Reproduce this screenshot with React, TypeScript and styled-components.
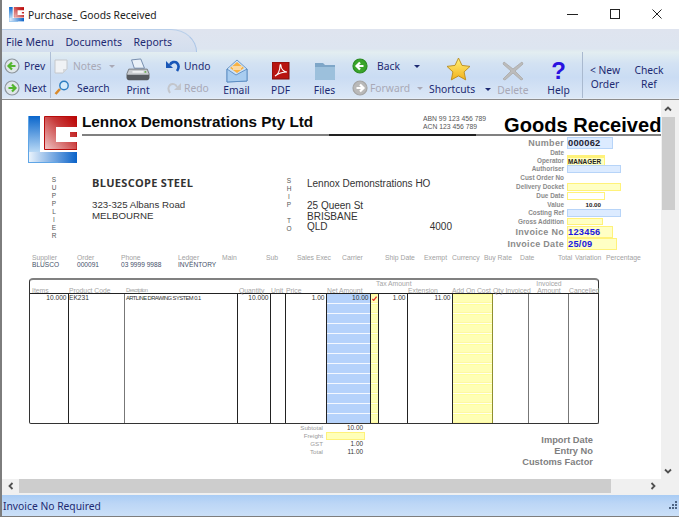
import React from "react";
import styled, { createGlobalStyle } from "styled-components";

const Global = createGlobalStyle`
  html, body { margin: 0; padding: 0; background: #fff; }
  * { box-sizing: border-box; }
  body { font-family: "Liberation Sans", Arial, sans-serif; }
`;

const Win = styled.div`
  width: 679px; height: 517px; overflow: hidden; display: flex; flex-direction: column;
  background: #f0f0f0; border-left: 2px solid #7d7d7d; border-bottom: 1px solid #7d7d7d;
`;
const TitleBar = styled.div`
  height: 29px; margin-left: -2px; background: #fff; display: flex; align-items: center; padding-left: 9px; flex: none;
`;
const TitleText = styled.span`
  font: 10.3px "Noto Sans", sans-serif; color: #222; margin-left: 4px;
`;
const WinButtons = styled.div`
  margin-left: auto; display: flex; align-items: center; height: 100%;
`;
const WinBtn = styled.div`
  width: 42.5px; display: flex; justify-content: center; margin-top: -1px;
`;
const MenuBar = styled.div`
  height: 23px; flex: none; background: linear-gradient(#dfe4ef, #dde5f0 85%, #e2edf0);
`;
const MenuTab = styled.div`
  width: 195px; height: 23px; padding: 6px 0 0 4px; display: flex; gap: 11.5px;
  border-top-right-radius: 26px 23px; border-right: 1px solid #a9c4e6; border-top: 1px solid #b9cfea;
  background: linear-gradient(#dde3ef, #d3deee);
`;
const navy = "#1d2a72";
const MenuItem = styled.span`
  font: 10.5px "Noto Sans", sans-serif; color: ${navy}; line-height: 13px;
`;
const Ribbon = styled.div`
  height: 47px; flex: none; display: flex; border-bottom: 1px solid #e4ecf6;
  background: linear-gradient(#e3eef1 0%, #d3e2f3 25%, #cadcf3 55%, #dbe7f6 100%);
`;
const RibbonEdge = styled.div`
  height: 1px; flex: none; background: #8d8d8d;
`;
const NavGroup = styled.div`
  width: 49px; border-right: 1px solid #aebfd6; display: flex; flex-direction: column; padding: 6px 0 0 2px; gap: 6px;
`;
const Stack = styled.div<{ $w: number; $pl?: number }>`
  width: ${p => p.$w}px; padding: 6px 0 0 ${p => p.$pl ?? 0}px; display: flex; flex-direction: column; gap: 6px;
`;
const StackRow = styled.div<{ $ml?: number }>`
  height: 16px; display: flex; align-items: center; margin-left: ${p => p.$ml ?? 0}px;
`;
const Label = styled.span<{ $off?: boolean; $ml?: number }>`
  font: 10.3px/13px "Noto Sans", sans-serif; white-space: nowrap;
  color: ${p => (p.$off ? "#a9a9b6" : navy)}; margin-left: ${p => p.$ml ?? 0}px;
`;
const Caret = styled.span<{ $off?: boolean; $ml: number }>`
  width: 0; height: 0; border: 3px solid transparent; border-top-color: ${p => (p.$off ? "#a9a9b6" : navy)};
  border-bottom: 0; margin-left: ${p => p.$ml}px;
`;
const BigCol = styled.div<{ $w: number; $start?: boolean }>`
  width: ${p => p.$w}px; display: flex; flex-direction: column; align-items: ${p => (p.$start ? "flex-start" : "center")};
  justify-content: flex-end; padding-bottom: 1px; height: 46px;
`;
const BigIcon = styled.div<{ $ml?: number }>`
  flex: 1; display: flex; align-items: center; justify-content: center; padding-top: 5px; margin-left: ${p => p.$ml ?? 0}px;
`;
const HelpMark = styled.span`
  font: bold 24px/24px "Liberation Sans", sans-serif; color: #2a12e0;
`;
const TextCol = styled.div<{ $w: number; $sep?: boolean }>`
  width: ${p => p.$w}px; text-align: center; padding-top: 11px; font: 10.3px/14px "Noto Sans", sans-serif; color: ${navy};
  ${p => (p.$sep ? "border-left: 1px solid #a9b9cf;" : "")}
`;
const Middle = styled.div`
  height: 379px; flex: none; display: flex;
`;
const Page = styled.div`
  width: 659px; height: 379px; background: #fff; overflow: hidden; flex: none; padding-left: 1px;
`;
const Letterhead = styled.div`
  display: flex; height: 36px; padding: 14px 0 0 25px;
`;
const HeadMain = styled.div`
  flex: 1; margin-left: 5px; height: 22px; display: flex;
  border-bottom: 2px solid; border-image: linear-gradient(90deg, #808080 0 247px, #222 247px 394px, #808080 394px) 1;
`;
const LogoWrap = styled.div`
  margin-top: 2px; height: 47px; flex: none;
`;
const Company = styled.div`
  font: bold 15.3px/15px "Liberation Sans", sans-serif; color: #0a0a0a; white-space: nowrap; width: 341px; flex: none;
`;
const Abn = styled.div`
  font: 6.8px/8px "Liberation Sans", sans-serif; color: #555; width: 81px; padding-top: 1px; flex: none;
`;
const DocTitle = styled.div`
  font: bold 20.1px/22px "Liberation Sans", sans-serif; color: #000; white-space: nowrap;
`;
const Body = styled.div`
  display: flex; height: 118px;
`;
const Parties = styled.div`
  width: 502px; padding: 40px 0 0 47px; display: flex; flex: none;
`;
const Party = styled.div<{ $w: number }>`
  width: ${p => p.$w}px; display: flex; flex: none;
`;
const SideLetters = styled.div<{ $pt?: number }>`
  width: 8px; flex: none; display: flex; flex-direction: column; text-align: center; padding-top: ${p => p.$pt ?? 0}px;
  font: 6.5px/8px "Liberation Sans", sans-serif; color: #555;
`;
const Address = styled.div<{ $ml: number; $w: number; $size: number }>`
  margin-left: ${p => p.$ml}px; width: ${p => p.$w}px; font: ${p => p.$size}px/10.5px "Liberation Sans", sans-serif; color: #333;
`;
const Supplier = styled.div`
  font: bold 11px/13px "Open Sans", sans-serif; color: #333; margin-bottom: 11px; letter-spacing: .3px; white-space: nowrap;
`;
const ShipName = styled.div`
  margin: 2px 0 12px; line-height: 11px; white-space: nowrap;
`;
const AddressLine = styled.div`
  display: flex; justify-content: space-between; width: 145px;
`;
const Fields = styled.div`
  padding-top: 1px; display: flex; flex-direction: column;
`;
const FieldRow = styled.div<{ $h: number }>`
  height: ${p => p.$h}px; display: flex; align-items: center;
`;
const FieldLabel = styled.div<{ $big?: boolean }>`
  width: 59px; margin-right: 3px; display: flex; justify-content: flex-end; white-space: nowrap; color: #8b8b8b; flex: none;
  font: bold ${p => (p.$big ? "9px" : "6.4px")}/8px "Liberation Sans", sans-serif; letter-spacing: ${p => (p.$big ? ".3px" : "0")};
`;
const tones: Record<string, string> = {
  blue: "background:#dcebff;border:1px solid #b7d4f8;",
  yellow: "background:#ffffc4;border:1px solid #fff27a;",
  hollow: "background:#fff;border:1px solid #fff27a;",
};
const FieldBox = styled.div<{ $tone: string; $w: number; $h?: number; $color?: string; $size?: number; $align?: string }>`
  width: ${p => p.$w}px; height: ${p => p.$h ?? 9}px; ${p => tones[p.$tone]} flex: none;
  align-self: ${p => p.$align ?? "center"};
  color: ${p => p.$color ?? "#222"}; font: bold ${p => p.$size ?? 6.4}px/${p => (p.$h ?? 9) - 2}px "Liberation Sans", sans-serif;
  letter-spacing: ${p => ((p.$size ?? 6) > 8 ? ".25px" : "0")}; white-space: nowrap;
`;
const PlainValue = styled.div`
  width: 34px; text-align: right; font: bold 6.2px/8px "Liberation Sans", sans-serif; color: #222;
`;
const InfoRow = styled.div`
  height: 24px; margin-left: 29px; display: grid;
  grid-template-columns: 45px 44px 57px 44px 44px 31px 45px 43px 39px 28px 32px 36px 38px 17px 31px 50px;
`;
const InfoCell = styled.div`
  font: 6.8px/7px "Liberation Sans", sans-serif; color: #a2a2a2; white-space: nowrap;
`;
const InfoValue = styled.div`
  color: #44506a; font-size: 6.6px;
`;
const Table = styled.div`
  margin-left: 26px; width: 570px; height: 146px; border: 1px solid #333; border-top: 2px solid #808080; border-radius: 4px 4px 2px 2px;
  display: flex; flex-direction: column;
`;
const cols = "39px 56px 113px 33px 15px 41px 44px 8px 29px 45px 40px 36px 40px 1fr";
const THead = styled.div`
  height: 14px; display: grid; grid-template-columns: ${cols}; border-bottom: 1px solid #222; flex: none;
`;
const TH = styled.div<{ $pl?: number; $pb?: number; $ml?: number; $center?: boolean }>`
  display: flex; align-items: flex-end; white-space: nowrap; text-align: ${p => (p.$center ? "center" : "left")};
  justify-content: ${p => (p.$center ? "center" : "flex-start")}; margin-left: ${p => p.$ml ?? 0}px;
  padding: 0 0 ${p => p.$pb ?? 0}px ${p => p.$pl ?? 0}px; font: 6.8px/7px "Liberation Sans", sans-serif; color: #a5a5a5;
`;
const TBody = styled.div`
  flex: 1; display: grid; grid-template-columns: ${cols};
`;
const blueStripe = "background: repeating-linear-gradient(#b5d2fb 0 9px, #f4f8ff 9px 10px);";
const yellowStripe = "background: repeating-linear-gradient(#ffff9c 0 1px, #ffffb4 1px 8px, #fff9a0 8px 9px, #fffff0 9px 10px);";
const TD = styled.div<{ $tone?: string; $line?: string; $right?: boolean; $pl?: number }>`
  ${p => (p.$tone === "blue" ? blueStripe : p.$tone === "yellow" ? yellowStripe : "")}
  border-right: 1px solid ${p => p.$line ?? "#222"}; text-align: ${p => (p.$right ? "right" : "left")};
  padding: 0 ${p => (p.$right ? "1.5px" : "0")} 0 ${p => p.$pl ?? 0}px; font: 6.6px/8px "Liberation Sans", sans-serif; color: #333;
  white-space: nowrap; overflow: hidden;
`;
const LastTD = styled(TD)`border-right: 0;`;
const Tight = styled.span`
  letter-spacing: -.55px; font-size: 5.8px;
`;
const TightHead = styled.span`
  letter-spacing: -.7px; font-size: 5.8px;
`;
const Footer = styled.div`
  display: flex;
`;
const Totals = styled.div`
  width: 362px; display: grid; grid-template-columns: 320px 39px; grid-auto-rows: 8px; column-gap: 3px; flex: none;
`;
const TotalLabel = styled.div`
  font: 6.2px/8px "Liberation Sans", sans-serif; color: #9a9a9a; text-align: right;
`;
const TotalValue = styled.div<{ $fill?: boolean }>`
  font: 6.4px/8px "Liberation Sans", sans-serif; color: #333; text-align: right; padding-right: 2px;
  ${p => (p.$fill ? "background:#ffffb8;border:1px solid #fff27a;" : "")}
`;
const Import = styled.div`
  width: 228px; text-align: right; padding-top: 11px; font: bold 9.3px/11px "Liberation Sans", sans-serif; color: #7f7f7f; flex: none;
`;
const VScroll = styled.div`
  width: 14px; height: 379px; flex: none; background: #f0f0f0; display: flex; flex-direction: column; align-items: center;
`;
const ScrollEnd = styled.div`
  height: 17px; width: 14px; flex: none; display: flex; align-items: center; justify-content: center;
`;
const VThumb = styled.div`
  width: 13px; height: 93px; background: #cdcdcd; flex: none;
`;
const HScroll = styled.div`
  height: 14px; flex: none; width: 659px; background: #f0f0f0; display: flex; align-items: stretch;
`;
const HEnd = styled.div`
  width: 17px; flex: none; display: flex; align-items: center; justify-content: center;
`;
const HThumb = styled.div`
  width: 592px; background: #cdcdcd; flex: none;
`;
const Spacer = styled.div`flex: 1;`;
const Gap = styled.div`height: 2px; flex: none; background: #f0f0f0;`;
const Status = styled.div`
  height: 21px; flex: none; display: flex; align-items: center; padding: 0 2px 0 1px; justify-content: space-between;
  background: linear-gradient(#a9ccf4, #bcd6f6 40%, #cbe0f8);
  font: 10.3px "Noto Sans", sans-serif; color: ${navy};
`;

const Logo = ({ w, id }: { w: number; id: string }) => (
  <svg width={w} height={(w * 47) / 49} viewBox="0 0 49 47" style={{ display: "block" }}>
    <defs>
      <linearGradient id={id + "b"} x1="0" y1="0" x2="0" y2="1">
        <stop offset="0" stopColor="#0a66cc" />
        <stop offset="1" stopColor="#b9d9f5" />
      </linearGradient>
      <linearGradient id={id + "h"} x1="0" y1="0" x2="1" y2="0">
        <stop offset="0" stopColor="#eef6fd" />
        <stop offset="1" stopColor="#0a62c8" />
      </linearGradient>
      <linearGradient id={id + "r"} x1="0" y1="1" x2="1" y2="0">
        <stop offset="0" stopColor="#f0c8c8" />
        <stop offset="0.6" stopColor="#c83a3a" />
        <stop offset="1" stopColor="#bb0000" />
      </linearGradient>
    </defs>
    <path d="M0 0h12v36H0z" fill={`url(#${id}b)`} />
    <path d="M0 36h49v11H0z" fill={`url(#${id}h)`} />
    <path d="M0 0h1v47H0zM0 46h30v1H0z" fill="#5fa5e6" />
    <path d="M16.5.5h32.5v33H16.5z" fill={`url(#${id}r)`} stroke="#b80c0c" />
    <path d="M28 11h21v5h-7v5h7v5H28z" fill="#fff" />
  </svg>
);

const RoundArrow = ({ dir, kind }: { dir: "l" | "r"; kind: "ring" | "green" | "gray" }) => {
  const fill = kind === "ring" ? "#dfe6ea" : kind === "green" ? "#3aa52a" : "#b9b9b9";
  const stroke = kind === "ring" ? "#8d959c" : kind === "green" ? "#2a8a20" : "#a5a5a5";
  const arrow = kind === "ring" ? "#53b52e" : "#fff";
  const d = dir === "l" ? "M11.5 8H5M8 4.5 4.5 8 8 11.5" : "M4.5 8H11M8 4.5 11.5 8 8 11.5";
  return (
    <svg width="16" height="16" viewBox="0 0 16 16">
      <circle cx="8" cy="8" r="7" fill={fill} stroke={stroke} strokeWidth="1.2" />
      <path d={d} fill="none" stroke={arrow} strokeWidth="2.2" />
    </svg>
  );
};

const Printer = () => (
  <svg width="24" height="25" viewBox="0 0 26 25">
    <path d="M6 1l10-1 4 10H9z" fill="#eaf1f8" stroke="#6f87a8" />
    <path d="M3 11h20l2 5v5H1v-5z" fill="#c9ccd0" stroke="#73777c" />
    <path d="M1 17h24v4a2 2 0 0 1-2 2H3a2 2 0 0 1-2-2z" fill="#55595e" />
    <path d="M7 13h12v2H7z" fill="#eef0f2" />
    <circle cx="21" cy="14" r="1" fill="#6ab04c" />
  </svg>
);
const UndoIcon = ({ off, flip }: { off?: boolean; flip?: boolean }) => (
  <svg width="15" height="14" viewBox="0 0 15 14" style={flip ? { transform: "scaleX(-1)" } : undefined}>
    <path d="M4 6C5 3 9 2 11 4s2 5 0 8" fill="none" stroke={off ? "#c3c6cc" : "#1957b8"} strokeWidth={off ? 2 : 2.6} />
    <path d="M0 2v7h7z" fill={off ? "#c3c6cc" : "#1957b8"} />
  </svg>
);
const Mail = () => (
  <svg width="22" height="24" viewBox="0 0 22 24">
    <path d="M1 10 11 1l10 9v12L1 23z" fill="#cfe2f5" stroke="#6f9bc9" />
    <path d="M4 9 11 3l7 6-7 5z" fill="#f8b244" />
    <path d="M6 8h10M7 10h8" stroke="#fff" strokeWidth="1" />
    <path d="M1 10l9 6 11-6v12L1 23z" fill="#a9cdf0" stroke="#4f83bd" strokeWidth=".8" />
  </svg>
);
const Pdf = () => (
  <svg width="18" height="18" viewBox="0 0 18 18">
    <rect width="17" height="17" fill="#b81410" stroke="#7a0f0c" />
    <path d="M3 14c3-1 5-6 5-10 0-2 1-2 1 0 0 3 3 6 6 6-3 0-8 1-12 4z" fill="none" stroke="#fff" strokeWidth="1.1" />
  </svg>
);
const Folder = () => (
  <svg width="22" height="18" viewBox="0 0 22 18">
    <path d="M1 1h8l2 2h10v14a1 1 0 0 1-1 1H2a1 1 0 0 1-1-1z" fill="#7ea6c8" />
    <path d="M1 5h20v12a1 1 0 0 1-1 1H2a1 1 0 0 1-1-1z" fill="#9cc0dc" />
  </svg>
);
const Star = () => (
  <svg width="25" height="24" viewBox="0 0 25 24">
    <defs>
      <linearGradient id="st" x1="0" y1="0" x2="0" y2="1">
        <stop offset="0" stopColor="#fff27a" />
        <stop offset="1" stopColor="#f3b11c" />
      </linearGradient>
    </defs>
    <path d="M12.5 1l3.5 7.4 8 1-5.9 5.5 1.6 8-7.2-4-7.2 4 1.6-8L1 9.4l8-1z" fill="url(#st)" stroke="#b88a1e" strokeWidth=".9" />
  </svg>
);
const Cross = () => (
  <svg width="22" height="20" viewBox="0 0 22 20">
    <path d="M2 1l9 7 9-7 1 2-8 7 8 8-2 1-8-7-8 7-2-1 8-8L1 3z" fill="#bcbcbc" stroke="#b0b0b0" strokeWidth="1" />
  </svg>
);
const Note = () => (
  <svg width="14" height="15" viewBox="0 0 14 15">
    <path d="M1 1h12v9l-4 4H1z" fill="#f0f2f5" stroke="#c5c8cc" />
    <path d="M13 10H9v4z" fill="#d5d8dc" />
  </svg>
);
const Lens = () => (
  <svg width="16" height="16" viewBox="0 0 16 16">
    <path d="M6 9l-4.5 5" stroke="#d98a2b" strokeWidth="2.6" />
    <circle cx="10" cy="5.5" r="4.2" fill="#d6ecfb" stroke="#2f7fc0" strokeWidth="1.4" />
  </svg>
);
const Chevron = ({ d }: { d: string }) => (
  <svg width="8" height="8" viewBox="0 0 8 8">
    <path d={d} fill="none" stroke="#505050" strokeWidth="1.8" />
  </svg>
);
const Check = () => (
  <svg width="5" height="5" viewBox="0 0 6 6" style={{ marginTop: 2, display: "block" }}>
    <path d="M0.5 3.5 2 5.2 5.5 0.8" fill="none" stroke="#e8352a" strokeWidth="1.6" />
  </svg>
);
const Grip = () => (
  <svg width="8" height="9" viewBox="0 0 8 9">
    <path d="M6 0h2v2H6zM3 3h2v2H3zM6 3h2v2H6zM0 6h2v2H0zM3 6h2v2H3zM6 6h2v2H6z" fill="#4f6584" />
  </svg>
);

const info: [string, string?][] = [
  ["Supplier", "BLUSCO"], ["Order", "000091"], ["Phone", "03 9999 9988"], ["Ledger", "INVENTORY"], ["Main"], ["Sub"],
  ["Sales Exec"], ["Carrier"], ["Ship Date"], ["Exempt"], ["Currency"], ["Buy Rate"], ["Date"], ["Total"], ["Variation"], ["Percentage"],
];

export default function App() {
  return (
    <Win>
      <Global />
      <TitleBar>
        <Logo w={15} id="t" />
        <TitleText>Purchase_ Goods Received</TitleText>
        <WinButtons>
          <WinBtn><svg width="11" height="11" viewBox="0 0 11 11"><path d="M0 5.5h11" stroke="#222" /></svg></WinBtn>
          <WinBtn><svg width="11" height="11" viewBox="0 0 11 11"><rect x=".5" y=".5" width="9" height="9" fill="none" stroke="#222" /></svg></WinBtn>
          <WinBtn><svg width="11" height="11" viewBox="0 0 11 11"><path d="M.5.5l9 9M9.5.5l-9 9" stroke="#222" /></svg></WinBtn>
        </WinButtons>
      </TitleBar>
      <MenuBar>
        <MenuTab>
          <MenuItem>File Menu</MenuItem>
          <MenuItem>Documents</MenuItem>
          <MenuItem>Reports</MenuItem>
        </MenuTab>
      </MenuBar>
      <Ribbon>
        <NavGroup>
          <StackRow><RoundArrow dir="l" kind="ring" /><Label $ml={4}>Prev</Label></StackRow>
          <StackRow><RoundArrow dir="r" kind="ring" /><Label $ml={4}>Next</Label></StackRow>
        </NavGroup>
        <Stack $w={73} $pl={3}>
          <StackRow><Note /><Label $off $ml={5}>Notes</Label><Caret $off $ml={7} /></StackRow>
          <StackRow><Lens /><Label $ml={7}>Search</Label></StackRow>
        </Stack>
        <BigCol $w={28}><BigIcon><Printer /></BigIcon><Label>Print</Label></BigCol>
        <Stack $w={62} $pl={14}>
          <StackRow><UndoIcon /><Label $ml={3}>Undo</Label></StackRow>
          <StackRow><UndoIcon off flip /><Label $off $ml={3}>Redo</Label></StackRow>
        </Stack>
        <BigCol $w={45}><BigIcon><Mail /></BigIcon><Label>Email</Label></BigCol>
        <BigCol $w={43}><BigIcon><Pdf /></BigIcon><Label>PDF</Label></BigCol>
        <BigCol $w={45}><BigIcon><Folder /></BigIcon><Label>Files</Label></BigCol>
        <Stack $w={77} $pl={5}>
          <StackRow><RoundArrow dir="l" kind="green" /><Label $ml={9}>Back</Label><Caret $ml={14} /></StackRow>
          <StackRow><RoundArrow dir="r" kind="gray" /><Label $off $ml={2}>Forward</Label><Caret $off $ml={7} /></StackRow>
        </Stack>
        <BigCol $w={67} $start>
          <BigIcon $ml={22}><Star /></BigIcon>
          <StackRow $ml={5}><Label>Shortcuts</Label><Caret $ml={10} /></StackRow>
        </BigCol>
        <BigCol $w={44}><BigIcon><Cross /></BigIcon><Label $off>Delete</Label></BigCol>
        <BigCol $w={47}><BigIcon><HelpMark>?</HelpMark></BigIcon><Label>Help</Label></BigCol>
        <TextCol $w={45} $sep>&lt; New<br />Order</TextCol>
        <TextCol $w={44}>Check<br />Ref</TextCol>
      </Ribbon>
      <RibbonEdge />
      <Middle>
        <Page>
          <Letterhead>
            <LogoWrap><Logo w={49} id="m" /></LogoWrap>
            <HeadMain>
              <Company>Lennox Demonstrations Pty Ltd</Company>
              <Abn>ABN 99 123 456 789<br />ACN 123 456 789</Abn>
              <DocTitle>Goods Received</DocTitle>
            </HeadMain>
          </Letterhead>
          <Body>
            <Parties>
              <Party $w={235}>
                <SideLetters>
                  {"SUPPLIER".split("").map((c, i) => <span key={i}>{c}</span>)}
                </SideLetters>
                <Address $ml={34} $w={190} $size={9.7}>
                  <Supplier>BLUESCOPE STEEL</Supplier>
                  <div>323-325 Albans Road</div>
                  <div>MELBOURNE</div>
                </Address>
              </Party>
              <Party $w={170}>
                <SideLetters $pt={1}>
                  {"SHIP TO".split("").map((c, i) => <span key={i}>{c === " " ? "\u00a0" : c}</span>)}
                </SideLetters>
                <Address $ml={14} $w={150} $size={10}>
                  <ShipName>Lennox Demonstrations HO</ShipName>
                  <div>25 Queen St</div>
                  <div>BRISBANE</div>
                  <AddressLine><span>QLD</span><span>4000</span></AddressLine>
                </Address>
              </Party>
            </Parties>
            <Fields>
              <FieldRow $h={11}><FieldLabel $big>Number</FieldLabel><FieldBox $tone="blue" $w={46} $h={12} $size={9.3} $color="#223" $align="flex-start">000062</FieldBox></FieldRow>
              <FieldRow $h={9}><FieldLabel>Date</FieldLabel><FieldBox $tone="yellow" $w={38} $h={2} $align="flex-end" /></FieldRow>
              <FieldRow $h={8}><FieldLabel>Operator</FieldLabel><FieldBox $tone="yellow" $w={38} $h={9}>MANAGER</FieldBox></FieldRow>
              <FieldRow $h={8}><FieldLabel>Authoriser</FieldLabel><FieldBox $tone="blue" $w={54} $h={8} /></FieldRow>
              <FieldRow $h={10}><FieldLabel>Cust Order No</FieldLabel></FieldRow>
              <FieldRow $h={8}><FieldLabel>Delivery Docket</FieldLabel><FieldBox $tone="yellow" $w={54} $h={8} /></FieldRow>
              <FieldRow $h={9}><FieldLabel>Due Date</FieldLabel><FieldBox $tone="hollow" $w={38} $h={8} /></FieldRow>
              <FieldRow $h={9}><FieldLabel>Value</FieldLabel><PlainValue>10.00</PlainValue></FieldRow>
              <FieldRow $h={8}><FieldLabel>Costing Ref</FieldLabel><FieldBox $tone="blue" $w={54} $h={8} /></FieldRow>
              <FieldRow $h={9}><FieldLabel>Gross Addition</FieldLabel><FieldBox $tone="yellow" $w={36} $h={7} /></FieldRow>
              <FieldRow $h={12}><FieldLabel $big>Invoice No</FieldLabel><FieldBox $tone="yellow" $w={46} $h={12} $size={9.3} $color="#2018e0">123456</FieldBox></FieldRow>
              <FieldRow $h={12}><FieldLabel $big>Invoice Date</FieldLabel><FieldBox $tone="yellow" $w={50} $h={12} $size={9.3} $color="#2018e0">25/09</FieldBox></FieldRow>
            </Fields>
          </Body>
          <InfoRow>
            {info.map(([l, v]) => (
              <InfoCell key={l}>{l}{v && <InfoValue>{v}</InfoValue>}</InfoCell>
            ))}
          </InfoRow>
          <Table>
            <THead>
              <TH $pl={2}>Items</TH>
              <TH>Product Code</TH>
              <TH $pl={1}><TightHead>Description</TightHead></TH>
              <TH $pl={1}>Quantity</TH>
              <TH>Unit</TH>
              <TH>Price</TH>
              <TH>Net Amount</TH>
              <TH />
              <TH $pb={7} $ml={-3}>Tax Amount</TH>
              <TH>Extension</TH>
              <TH $ml={-1}>Add On Cost</TH>
              <TH>Qty Invoiced</TH>
              <TH $center>Invoiced<br />Amount</TH>
              <TH>Cancelled</TH>
            </THead>
            <TBody>
              <TD $right>10.000</TD>
              <TD $line="#777">EK231</TD>
              <TD $pl={1}><Tight>ARTLINE DRAWING SYSTEM 0.1</Tight></TD>
              <TD $right>10.000</TD>
              <TD />
              <TD $right>1.00</TD>
              <TD $tone="blue" $right>10.00</TD>
              <TD $tone="yellow" $pl={1}><Check /></TD>
              <TD $right>1.00</TD>
              <TD $right>11.00</TD>
              <TD $tone="yellow" $line="#8f8f30" />
              <TD $line="#777" />
              <TD $line="#777" />
              <LastTD />
            </TBody>
          </Table>
          <Footer>
            <Totals>
              <TotalLabel>Subtotal</TotalLabel><TotalValue>10.00</TotalValue>
              <TotalLabel>Freight</TotalLabel><TotalValue $fill />
              <TotalLabel>GST</TotalLabel><TotalValue>1.00</TotalValue>
              <TotalLabel>Total</TotalLabel><TotalValue>11.00</TotalValue>
            </Totals>
            <Import>Import Date<br />Entry No<br />Customs Factor</Import>
          </Footer>
        </Page>
        <VScroll>
          <ScrollEnd><Chevron d="M1 5.5l3-3 3 3" /></ScrollEnd>
          <VThumb />
          <Spacer />
          <ScrollEnd><Chevron d="M1 2.5l3 3 3-3" /></ScrollEnd>
        </VScroll>
      </Middle>
      <HScroll>
        <HEnd><Chevron d="M5.5 1l-3 3 3 3" /></HEnd>
        <HThumb />
        <Spacer />
        <HEnd><Chevron d="M2.5 1l3 3-3 3" /></HEnd>
      </HScroll>
      <Gap />
      <Status>
        <span>Invoice No Required</span>
        <Grip />
      </Status>
    </Win>
  );
}
